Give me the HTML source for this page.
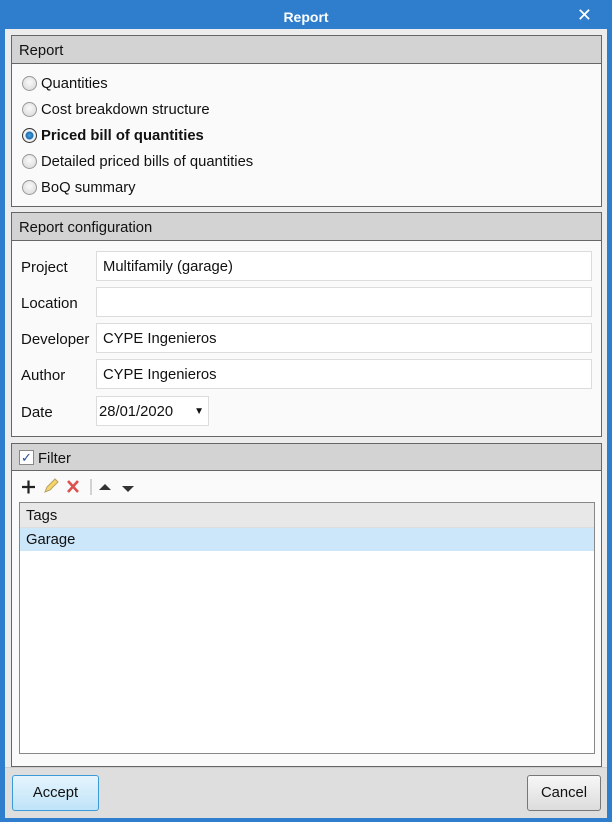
<!DOCTYPE html>
<html><head><meta charset="utf-8"><style>
*{box-sizing:border-box;margin:0;padding:0}
body{width:612px;height:822px;position:relative;background:#2f7ecd;font-family:"Liberation Sans",sans-serif;font-size:14.8px;color:#111;overflow:hidden}
.a{position:absolute}
.title{left:0;top:0;width:612px;height:30px;color:#fff;font-weight:bold;text-align:center;line-height:34px;font-size:14px}
.x{right:20px;top:5px;color:#fff;font-size:18px}
.inner{left:5px;top:29px;width:602px;height:789px;background:#ececec}
.panel{border:1px solid #666;background:#fafafa}
.hd{position:absolute;left:0;top:0;right:0;height:28px;background:#d3d3d3;border-bottom:1px solid #666;padding-left:7px;line-height:30px;font-size:14.8px}
.radio{position:absolute;left:10px;width:15px;height:15px;border-radius:50%;border:1px solid #999;background:radial-gradient(circle at 50% 40%,#fafafa,#d6d6d6)}
.rl{position:absolute;left:29px;font-size:14.8px}
.lab{position:absolute;left:9px;font-size:15px}
.inp{position:absolute;left:84px;width:496px;height:30px;border:1px solid #dcdcdc;background:#fff;padding-left:6px;line-height:30px;font-size:14.8px}
</style></head><body>
<div class="a title">Report</div>
<div class="a x">✕</div>
<div class="a inner"></div>

<div class="a panel" style="left:11px;top:35px;width:591px;height:172px">
<div class="hd">Report</div>
<div class="radio" style="top:40px"></div><div class="rl" style="top:40px">Quantities</div>
<div class="radio" style="top:66px"></div><div class="rl" style="top:66px">Cost breakdown structure</div>
<div class="radio" style="top:92px;border-color:#333;background:radial-gradient(circle,#4aa3e0 0,#1c6fb0 3.5px,#fafafa 4.5px,#ddd 7px)"></div><div class="rl" style="top:92px;font-weight:bold">Priced bill of quantities</div>
<div class="radio" style="top:118px"></div><div class="rl" style="top:118px">Detailed priced bills of quantities</div>
<div class="radio" style="top:144px"></div><div class="rl" style="top:144px">BoQ summary</div>
</div>

<div class="a panel" style="left:11px;top:212px;width:591px;height:225px">
<div class="hd">Report configuration</div>
<div class="lab" style="top:46px">Project</div><div class="inp" style="top:38px">Multifamily (garage)</div>
<div class="lab" style="top:82px">Location</div><div class="inp" style="top:74px"></div>
<div class="lab" style="top:118px">Developer</div><div class="inp" style="top:110px">CYPE Ingenieros</div>
<div class="lab" style="top:154px">Author</div><div class="inp" style="top:146px">CYPE Ingenieros</div>
<div class="lab" style="top:191px">Date</div><div class="inp" style="top:183px;width:113px;padding-left:2px">28/01/2020<span style="position:absolute;right:4px;top:0;font-size:10px">▼</span></div>
</div>

<div class="a panel" style="left:11px;top:443px;width:591px;height:324px">
<div class="hd" style="height:27px;padding-left:26px">Filter</div>
<div class="a" style="left:7px;top:6px;width:15px;height:15px;border:1px solid #888;background:#fff;color:#2a4a9a;font-size:13px;line-height:13px;text-align:center">✓</div>
<svg class="a" style="left:8px;top:33px" width="130" height="20">
<path d="M2 10H15M8.5 3.5V16.5" stroke="#222" stroke-width="2.2"/>
<path d="M25 15l2-5 8-8 3 3-8 8z" fill="#f3d56a" stroke="#b8a060" stroke-width="1"/>
<path d="M48 4l10 11M58 4L48 15" stroke="#d9534f" stroke-width="2.6"/>
<path d="M71 2V18" stroke="#aaa"/>
<path d="M79 13l6-6 6 6z" fill="#333"/><path d="M102 9l6 6 6-6z" fill="#333"/>
</svg>
<div class="a" style="left:7px;top:58px;width:576px;height:252px;border:1px solid #888;background:#fff">
<div style="height:25px;background:#e8e8e8;border-bottom:1px solid #ddd;padding-left:6px;line-height:27px;font-size:14.8px">Tags</div>
<div style="height:23px;background:#cce6fa;padding-left:6px;line-height:25px;font-size:14.8px">Garage</div>
</div>
</div>
<div class="a" style="left:5px;top:767px;width:602px;height:1px;background:#ccc"></div>
<div class="a" style="left:5px;top:768px;width:602px;height:50px;background:#dedede"></div>
<div class="a" style="left:12px;top:775px;width:87px;height:36px;border:1px solid #3c9ad8;border-radius:3px;background:linear-gradient(#e6f5fd,#bfe3f8);text-align:center;line-height:35px;font-size:14.8px">Accept</div>
<div class="a" style="left:527px;top:775px;width:74px;height:36px;border:1px solid #777;border-radius:3px;background:linear-gradient(#f7f7f7,#dcdcdc);text-align:center;line-height:35px;font-size:14.8px">Cancel</div>
</body></html>
